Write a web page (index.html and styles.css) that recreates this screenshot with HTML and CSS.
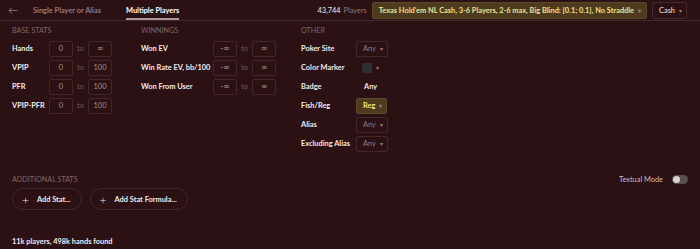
FILE: index.html
```html
<!DOCTYPE html>
<html>
<head>
<title>Players Filter</title>
<link rel="stylesheet" href="styles.css">
</head>
<body>
<div id="topbar">
    <div class="tabs">
        <span class="back">&#8592;</span>
        <span class="tab">Single Player or Alias</span>
        <span class="tab active">Multiple Players</span>
    </div>
    <div class="right">
        <span class="count">43,744</span>
        <span class="count-label">Players</span>
        <div class="game-select">Texas Hold'em NL Cash, 3-6 Players, 2-6 max, Big Blind: [0.1; 0.1], No Straddle<span class="caret">&#9662;</span></div>
        <div class="select">Cash<span class="caret">&#9662;</span></div>
    </div>
</div>

<div id="filters">
    <div class="group base">
        <div class="group-title">Base Stats</div>
        <div class="row"><span class="label">Hands</span><span class="box">0</span><span class="to">to</span><span class="box inf">&#8734;</span></div>
        <div class="row"><span class="label">VPIP</span><span class="box">0</span><span class="to">to</span><span class="box">100</span></div>
        <div class="row"><span class="label">PFR</span><span class="box">0</span><span class="to">to</span><span class="box">100</span></div>
        <div class="row"><span class="label">VPIP-PFR</span><span class="box">0</span><span class="to">to</span><span class="box">100</span></div>
    </div>
    <div class="group winnings">
        <div class="group-title">Winnings</div>
        <div class="row"><span class="label">Won EV</span><span class="box inf">-&#8734;</span><span class="to">to</span><span class="box inf">&#8734;</span></div>
        <div class="row"><span class="label">Win Rate EV, bb/100</span><span class="box inf">-&#8734;</span><span class="to">to</span><span class="box inf">&#8734;</span></div>
        <div class="row"><span class="label">Won From User</span><span class="box inf">-&#8734;</span><span class="to">to</span><span class="box inf">&#8734;</span></div>
    </div>
    <div class="group other">
        <div class="group-title">Other</div>
        <div class="row"><span class="label">Poker Site</span><span class="dd">Any<span class="caret">&#9662;</span></span></div>
        <div class="row"><span class="label">Color Marker</span><span class="color"><span class="swatch"></span><span class="caret">&#9662;</span></span></div>
        <div class="row"><span class="label">Badge</span><span class="plain">Any</span></div>
        <div class="row"><span class="label">Fish/Reg</span><span class="dd on">Reg<span class="caret">&#9662;</span></span></div>
        <div class="row"><span class="label">Alias</span><span class="dd">Any<span class="caret">&#9662;</span></span></div>
        <div class="row"><span class="label">Excluding Alias</span><span class="dd">Any<span class="caret">&#9662;</span></span></div>
    </div>
</div>

<div id="additional">
    <div class="add-head">
        <div class="group-title">Additional Stats</div>
        <div class="textual">Textual Mode <span class="toggle"><span class="knob"></span></span></div>
    </div>
    <div class="add-buttons">
        <button class="pill"><span class="plus">+</span>Add Stat...</button>
        <button class="pill"><span class="plus">+</span>Add Stat Formula...</button>
    </div>
</div>

<div id="footer">11k players, 498k hands found</div>
</body>
</html>
```

FILE: styles.css
```css
body {
    margin: 0;
    width: 700px;
    height: 249px;
    background-color: #2b1114;
    color: #eee5e5;
    font-family: Lato, "Open Sans", sans-serif;
    font-size: 7.4px;
    overflow: hidden;
    display: flex;
    flex-direction: column;
}

#topbar {
    height: 20px;
    border-bottom: 1px solid #442a2c;
    display: flex;
    justify-content: space-between;
    align-items: center;
    padding: 0 13px 0 6px;
}

.tabs {
    display: flex;
    align-items: stretch;
    height: 100%;
}

.back {
    color: #8f7b7c;
    font-size: 10px;
    width: 25px;
    padding-left: 2px;
    display: flex;
    align-items: center;
}

.tab {
    display: flex;
    align-items: center;
    color: #8f7b7c;
    margin-right: 25px;
    font-weight: bold;
    border-bottom: 2px solid transparent;
    padding-top: 2px;
}

.tab.active {
    color: #ffffff;
    border-bottom-color: #a8999a;
}

.right {
    display: flex;
    align-items: center;
}

.count {
    color: #f2eaea;
    margin-right: 3px;
}

.count-label {
    color: #8f7b7c;
    margin-right: 5px;
}

.game-select {
    background-color: #4d3a1f;
    border: 1px solid #5c4826;
    color: #ede08c;
    border-radius: 2px;
    padding: 2px 5px 2px 6px;
    height: 11px;
    line-height: 11px;
    font-weight: bold;
}

.select {
    border: 1px solid #442a2c;
    border-radius: 2px;
    padding: 2px 4px 2px 6px;
    height: 11px;
    line-height: 11px;
    margin-left: 5px;
}

.caret {
    color: #8f7b7c;
    font-size: 6px;
    margin-left: 4px;
}

#filters {
    display: flex;
    padding: 4px 12px 0 12px;
}

.group-title {
    text-transform: uppercase;
    color: #7d6668;
    font-size: 7.2px;
    height: 11px;
    line-height: 11px;
    margin-bottom: 3px;
}

.base {
    width: 129px;
}

.winnings {
    width: 160px;
}

.row {
    display: flex;
    align-items: center;
    height: 19px;
    white-space: nowrap;
}

.label {
    font-weight: bold;
    color: #f2eaea;
}

.base .label {
    width: 37px;
}

.winnings .label {
    width: 72px;
}

.other .label {
    width: 55px;
}

.box {
    min-width: 14px;
    height: 14px;
    line-height: 14px;
    padding: 0 4px;
    border: 1px solid #422628;
    border-radius: 2px;
    color: #a39293;
    text-align: center;
}

.box.inf {
    font-family: "DejaVu Sans", sans-serif;
    font-size: 8px;
}

.to {
    color: #6f5a5c;
    width: 15px;
    text-align: center;
}

.dd {
    border: 1px solid #422628;
    border-radius: 2px;
    height: 14px;
    line-height: 14px;
    padding: 0 4px 0 6px;
    color: #8f7b7c;
}

.dd.on {
    background-color: #4d3a1f;
    border-color: #5c4826;
    color: #f2e67a;
    font-weight: bold;
}

.color {
    display: flex;
    align-items: center;
    padding-left: 6px;
}

.swatch {
    width: 10px;
    height: 10px;
    background-color: #2e2f30;
    border-radius: 1px;
}

.plain {
    padding-left: 8px;
    font-weight: bold;
}

#additional {
    margin-top: 21px;
    padding: 0 12px;
}

.add-head {
    display: flex;
    justify-content: space-between;
    align-items: center;
}

.textual {
    display: flex;
    align-items: center;
    color: #c9bcbd;
    margin-bottom: 3px;
}

.toggle {
    width: 15px;
    height: 9px;
    border-radius: 5px;
    background-color: #5a4d4e;
    margin-left: 9px;
    display: flex;
    align-items: center;
    padding-left: 1px;
}

.knob {
    width: 7px;
    height: 7px;
    border-radius: 50%;
    background-color: #d8d2d2;
}

.add-buttons {
    display: flex;
    gap: 8px;
}

.pill {
    font-family: inherit;
    font-size: 7.4px;
    font-weight: bold;
    color: #f2eaea;
    background: transparent;
    border: 1px solid #40262a;
    border-radius: 11px;
    height: 22px;
    padding: 0 10px 0 9px;
    display: flex;
    align-items: center;
}

.plus {
    font-size: 12px;
    margin-right: 8px;
    font-weight: 300;
}

#footer {
    margin-top: auto;
    padding: 0 12px 3px 12px;
    color: #f2eaea;
    font-weight: bold;
}
```
